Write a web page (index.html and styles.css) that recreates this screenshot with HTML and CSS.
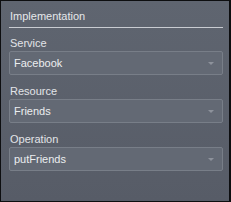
FILE: index.html
```html
<!DOCTYPE html>
<html lang="en">
<head>
  <meta charset="UTF-8">
  <title>Implementation</title>
  <link rel="stylesheet" href="styles.css">
</head>
<body>

  <div class="panel">
    <h2 class="panel-title">Implementation</h2>

    <div class="field">
      <label for="service">Service</label>
      <div class="select-box" id="service">
        <span>Facebook</span>
        <span class="arrow"></span>
      </div>
    </div>

    <div class="field">
      <label for="resource">Resource</label>
      <div class="select-box" id="resource">
        <span>Friends</span>
        <span class="arrow"></span>
      </div>
    </div>

    <div class="field">
      <label for="operation">Operation</label>
      <div class="select-box" id="operation">
        <span>putFriends</span>
        <span class="arrow"></span>
      </div>
    </div>
  </div>

</body>
</html>
```

FILE: styles.css
```css
body {
  margin: 0;
  background-color: #0d0e10;
  font-family: "Liberation Sans", Arial, sans-serif;
}

.panel {
  height: 191px;
  margin: 1px 2px 1px 1px;
  padding: 9px 6px 0 8px;
  background: linear-gradient(#5f6570, #575c67);
  color: #e2e4e8;
}

.panel-title {
  margin: 0;
  padding: 0 0 4px 1px;
  font-size: 11px;
  font-weight: normal;
  line-height: 13px;
  color: #e6e8eb;
  border-bottom: 1px solid #c9ccd2;
}

.field {
  display: flex;
  flex-direction: column;
}

label {
  display: block;
  margin: 8px 0 0 1px;
  font-size: 11px;
  line-height: 14px;
  color: #e2e4e8;
}

.field + .field label {
  margin-top: 9px;
}

.select-box {
  display: flex;
  align-items: center;
  justify-content: space-between;
  height: 22px;
  margin-top: 1px;
  padding: 0 0 0 4px;
  background-color: #636974;
  border: 1px solid #787e88;
  border-radius: 2px;
  font-size: 11px;
  color: #eceef0;
}

.arrow {
  width: 0;
  height: 0;
  margin-right: 8px;
  border-left: 3px solid transparent;
  border-right: 3px solid transparent;
  border-top: 3px solid #8d929b;
}
```
